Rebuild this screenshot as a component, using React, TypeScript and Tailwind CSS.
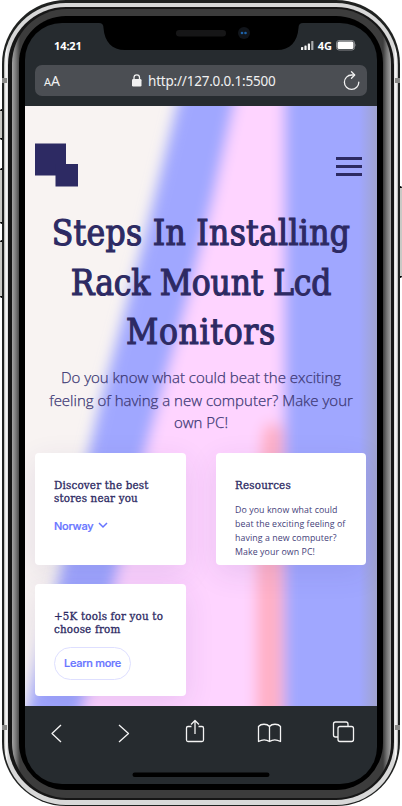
import type { ReactNode } from "react";

const HEADING = "font-['DejaVu_Serif_Condensed','DejaVu_Serif',serif] [font-stretch:condensed]";
const UI = "font-['Noto_Sans','Open_Sans',sans-serif]";

function StatusBar() {
  return (
    <div className={`relative h-[42px] shrink-0 text-white ${UI}`}>
      <div className="flex h-[44px] items-center justify-between pl-[29px] pr-[20px]">
        <span className="text-[11px] font-bold leading-none tracking-[-0.1px]">14:21</span>
        <div className="flex items-center">
          <svg width="13" height="9" viewBox="0 0 13 9" fill="#f4f4f4">
            <rect x="0" y="6" width="2.2" height="3" rx=".6" />
            <rect x="3.4" y="4.5" width="2.2" height="4.5" rx=".6" />
            <rect x="6.8" y="2.5" width="2.2" height="6.5" rx=".6" />
            <rect x="10.2" y="0" width="2.2" height="9" rx=".6" fill="#a9abad" />
          </svg>
          <span className="ml-[4px] text-[11px] font-bold leading-none">4G</span>
          <svg className="ml-[4px]" width="21" height="11" viewBox="0 0 21 11">
            <rect x=".5" y=".5" width="18" height="9.5" rx="2.5" fill="none" stroke="#85888b" />
            <rect x="1.500" y="1.500" width="16" height="7.500" rx="1.500" fill="#fff" />
            <path d="M19.4 3.6q1.4 1.6 0 3.2z" fill="#85888b" />
          </svg>
        </div>
      </div>
      <svg className="absolute -top-px left-[74px]" width="204" height="29" viewBox="0 0 204 29">
        <path d="M0 0v1q4.500 0 4.500 5C5.500 20 13 28 26 28H178c13 0 20.500-8 21.500-22q0-5 4.500-5V0z" fill="#000" />
        <rect x="77" y="8" width="50" height="6.500" rx="3.200" fill="#161617" />
        <circle cx="145" cy="11" r="6" fill="#11151b" />
        <circle cx="143" cy="11" r="1.300" fill="#1e62a8" />
        <circle cx="146.500" cy="11" r="1.300" fill="#1e62a8" />
      </svg>
    </div>
  );
}

function AddressBar() {
  return (
    <div className={`h-[41px] shrink-0 px-[10px] text-[#f1f1f1] ${UI}`}>
      <div className="flex h-[31px] items-center rounded-[7px] bg-[#4b4e53]">
        <span className="ml-[9px] flex items-baseline leading-none">
          <span className="text-[11px]">A</span>
          <span className="text-[14px]">A</span>
        </span>
        <svg className="ml-[72px]" width="10" height="13" viewBox="0 0 10 13">
          <rect x="0" y="5" width="9.500" height="7.500" rx="1.200" fill="#f1f1f1" />
          <path d="M2 5.500V3.600a2.750 2.750 0 0 1 5.500 0v1.900" fill="none" stroke="#f1f1f1" strokeWidth="1.300" />
        </svg>
        <span className="ml-[6px] mt-[2px] w-[130px] whitespace-nowrap text-[13.5px] leading-none tracking-[-0.2px]">http://127.0.0.1:5500</span>
        <svg className="ml-auto mr-[6px]" width="18" height="20" viewBox="0 0 18 20" fill="none" stroke="#f1f1f1" strokeWidth="1.300" strokeLinecap="round" strokeLinejoin="round">
          <path d="M11.500 4H8.600a7.200 7.200 0 1 0 7.200 7.200" />
          <path d="M8.500 .8l3.200 3.200L8.500 7.200" />
        </svg>
      </div>
    </div>
  );
}

function Backdrop() {
  return (
    <svg className="absolute inset-0" width="352" height="600" viewBox="0 0 352 600">
      <defs>
        <filter id="soft" filterUnits="userSpaceOnUse" x="-60" y="-60" width="480" height="720">
          <feGaussianBlur stdDeviation="7" />
        </filter>
        <linearGradient id="edge">
          <stop offset="0" stopColor="#a0a0a8" stopOpacity="0" />
          <stop offset="1" stopColor="#a0a0a8" stopOpacity="0.550" />
        </linearGradient>
      </defs>
      <rect width="352" height="600" fill="#f8f3f2" />
      <g filter="url(#soft)">
        <path d="M168-60L152 0 119 134 76 294 35 469-7 640H420V-60z" fill="#a0a7ff" />
        <path d="M222-60L209 0 188 94 163 194 135 294 120 348 92 469 48 640H259V-60z" fill="#fed4ff" />
        <path d="M238 324q9-14 20 0V660H231V400z" fill="#ffb0c6" />
      </g>
      <rect x="334" width="18" height="600" fill="url(#edge)" />
    </svg>
  );
}

function Card({ children }: { children: ReactNode }) {
  return (
    <div className="h-[112px] rounded-[4px] bg-white px-[19px] pt-[26px] shadow-[0_8px_30px_rgba(60,50,130,0.11)]">
      {children}
    </div>
  );
}

function CardTitle({ children }: { children: ReactNode }) {
  return (
    <h2 className={`${HEADING} whitespace-nowrap text-[11.500px] leading-[12.500px] tracking-[0.18px] [-webkit-text-stroke:0.3px]`}>{children}</h2>
  );
}

function Page() {
  return (
    <main className="relative h-[600px] shrink-0 overflow-hidden text-[#2d2a63]">
      <Backdrop />
      <div className="relative px-[10px]">
        <header className="flex items-start justify-between pr-[5px] pt-[37px]">
          <svg width="43" height="44" viewBox="0 0 43 44" fill="#2d2a63">
            <rect x="0" y="0.500" width="31" height="32" />
            <rect x="20.500" y="21" width="22.500" height="22.500" />
          </svg>
          <div className="mt-[14px] flex w-[26px] flex-col gap-[5px]">
            <i className="h-[3px] bg-[#2d2a63]" />
            <i className="h-[3px] bg-[#2d2a63]" />
            <i className="h-[3px] bg-[#2d2a63]" />
          </div>
        </header>
        <h1 className={`${HEADING} mt-[22px] flex flex-col items-center whitespace-nowrap text-[35px] leading-[49.500px] [-webkit-text-stroke:1.1px]`}>
          <span className="tracking-[0.3px]">Steps In Installing</span>
          <span className="tracking-[-0.2px]">Rack Mount Lcd</span>
          <span className="tracking-[0.7px]">Monitors</span>
        </h1>
        <p className="mt-[8.500px] flex flex-col items-center whitespace-nowrap font-['Open_Sans',sans-serif] text-[15px] font-light leading-[22.500px] text-[#3c3874] [-webkit-text-stroke:0.25px]">
          <span>Do you know what could beat the exciting</span>
          <span>feeling of having a new computer? Make your</span>
          <span>own PC!</span>
        </p>
        <section className="mt-[19.500px] grid grid-cols-[150.5px_150px] gap-x-[30.5px] gap-y-[19px]">
          <Card>
            <CardTitle>Discover the best<br />stores near you</CardTitle>
            <div className="mt-[12.500px] flex items-center font-['Inter',sans-serif] text-[11px] font-medium leading-[18px] tracking-[-0.25px] text-[#6674ff] [-webkit-text-stroke:0.2px]">
              Norway
              <svg className="ml-[5px]" width="10" height="7" viewBox="0 0 10 7" fill="none" stroke="currentColor" strokeWidth="1.500">
                <path d="M1 1l4 4 4-4" />
              </svg>
            </div>
          </Card>
          <Card>
            <CardTitle>Resources</CardTitle>
            <p className="mt-[11px] whitespace-nowrap font-['Open_Sans',sans-serif] text-[8.800px] leading-[14px] tracking-[0.08px] text-[#45417a]">
              Do you know what could<br />beat the exciting feeling of<br />having a new computer?<br />Make your own PC!
            </p>
          </Card>
          <Card>
            <CardTitle>+5K tools for you to<br />choose from</CardTitle>
            <button className="mt-[12px] flex h-[32.500px] w-[77px] items-center justify-center whitespace-nowrap rounded-full border border-[#dedfff] font-['Inter',sans-serif] text-[11px] font-medium tracking-[-0.3px] text-[#6674ff] [-webkit-text-stroke:0.2px]">
              Learn more
            </button>
          </Card>
        </section>
      </div>
    </main>
  );
}

function Toolbar() {
  return (
    <nav className="relative flex-1">
      <svg width="352" height="78" viewBox="0 0 352 78" fill="none" stroke="#f4f4f4" strokeWidth="1.300" strokeLinejoin="round">
        <path d="M36 19l-9 8.500 9 8.500M94 19l9.500 8.500-9.500 8.500" />
        <path d="M166.500 20.500h-3.500q-1.500 0-1.500 1.500v12q0 1.500 1.500 1.500h14q1.500 0 1.500-1.500v-12q0-1.500-1.500-1.500h-3.500M170 28V14.500M166 18.500l4-4 4 4" />
        <path d="M244.500 20.500c-2.500-3-8.500-3-11 0v15c3.500-2 8-2 11 0 3-2 7.500-2 11 0v-15c-2.500-3-8.500-3-11 0zM244.500 20.500v15" />
        <rect x="313" y="20.500" width="15.500" height="15" rx="2" />
        <path d="M313 31h-2.500q-2 0-2-2v-11q0-2 2-2H321q2 0 2 2v2.500" />
        <rect x="107.500" y="66.500" width="137" height="4.500" rx="2.250" fill="#000" stroke="none" />
      </svg>
    </nav>
  );
}

export default function App() {
  return (
    <div className="relative h-[806px] w-[402px] overflow-hidden bg-white">
      <i className="absolute left-0 top-[109px] h-[31px] w-[5px] rounded-l-[2px] border-y-2 border-black bg-[#c9c9c5]" />
      <i className="absolute left-0 top-[168px] h-[56px] w-[5px] rounded-l-[2px] border-y-2 border-black bg-[#c9c9c5]" />
      <i className="absolute left-0 top-[240px] h-[58px] w-[5px] rounded-l-[2px] border-y-2 border-black bg-[#c9c9c5]" />
      <i className="absolute right-0 top-[186px] h-[92px] w-[5px] rounded-r-[2px] border-y-2 border-black bg-[#c9c9c5]" />
      <div className="relative mx-[2px] h-[806px] rounded-[64px] bg-[#202221] px-[2px] pb-px pt-[3px]">
        <div className="h-full rounded-[62px] bg-[linear-gradient(90deg,#aaaaa6,#fff_2px,#d8d8d8_4px,#d8d8d8_390px,#fff_392px,#aaa)] px-[4px] pb-[5px] pt-[4px]">
          <div className="h-full rounded-[58px] bg-[#161616] px-[3.500px] py-[2px]">
            <div className="h-full rounded-[55px] bg-[linear-gradient(90deg,#a3a3a3,#777_4px,#3c3c3c_8px,#3c3c3c_371px,#777_375px,#a3a3a3)] px-[7.500px] pb-[8px] pt-[7px]">
              <div className="h-full rounded-[47px] bg-black px-[6px] pb-[6px] pt-[7px]">
                <div className="flex h-[761px] w-[352px] flex-col overflow-hidden rounded-[37px] bg-[#262b2f]">
                  <StatusBar />
                  <AddressBar />
                  <Page />
                  <Toolbar />
                </div>
              </div>
            </div>
          </div>
        </div>
      </div>
      <i className="absolute left-[2px] top-[78px] h-[5px] w-[5px] bg-[#8a8a88]" />
      <i className="absolute right-[2px] top-[78px] h-[5px] w-[5px] bg-[#8a8a88]" />
      <i className="absolute left-[2px] top-[725px] h-[5px] w-[5px] bg-[#8a8a88]" />
      <i className="absolute right-[2px] top-[725px] h-[5px] w-[5px] bg-[#8a8a88]" />
    </div>
  );
}
